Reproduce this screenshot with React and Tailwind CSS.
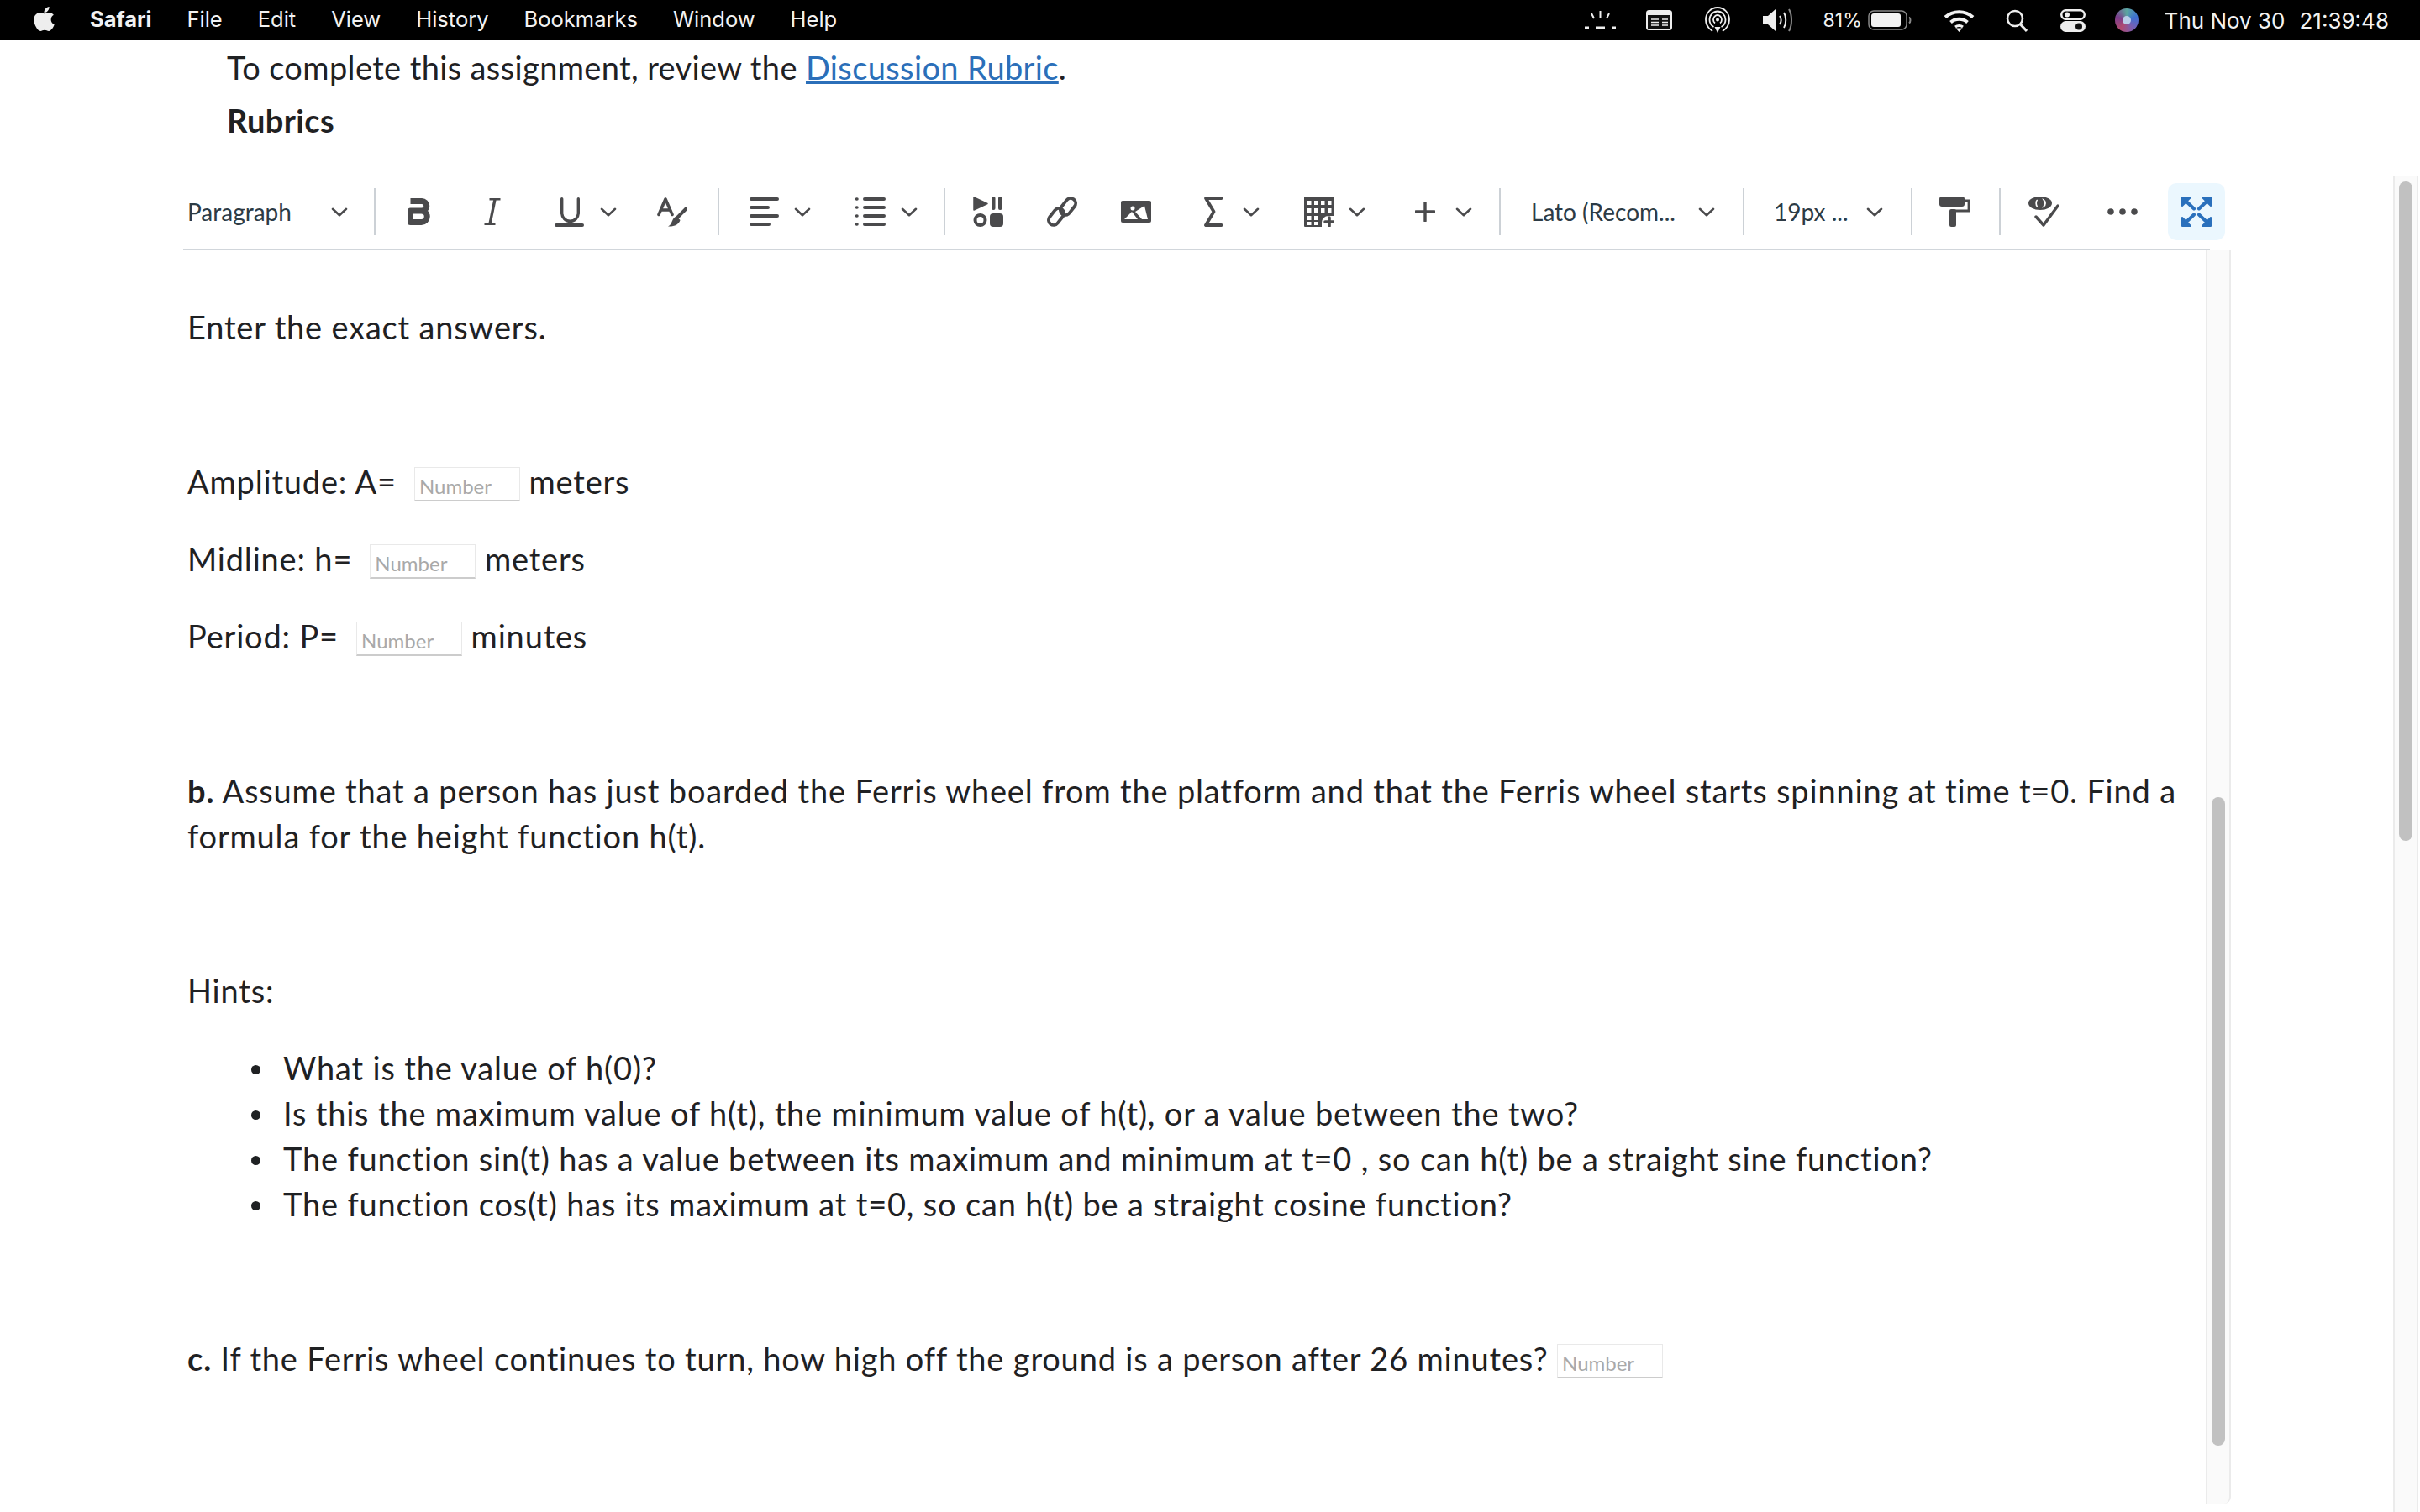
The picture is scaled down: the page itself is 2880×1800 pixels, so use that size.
import React from "react";
import { FaApple } from "react-icons/fa";

const ICON = "#4a4a4c";

const Chevron = ({ className = "" }) => (
  <svg className={`shrink-0 ${className}`} width="20" height="11" viewBox="0 0 20 11" fill="none">
    <path d="M2 1.8 L10 9.200 L18 1.800" stroke={ICON} strokeWidth="2.600" strokeLinecap="round" strokeLinejoin="round" />
  </svg>
);

const Sep = ({ className = "" }) => <div className={`w-[2px] h-[56px] shrink-0 bg-[#ccd1d6] ${className}`} />;

const Placeholder = () => (
  <span className="inline-block w-[126px] h-[41px] align-baseline border border-[#e9e9e9] border-b-2 border-b-[#cccccc] pl-[5px] text-[24px] leading-[44px] tracking-normal text-[#a9a9a9]">
    Number
  </span>
);

const Body = ({ children }) => <p className="mb-[38px]">{children}</p>;

const Hint = ({ children }) => (
  <li className="relative">
    <span className="absolute -left-[38px] top-[24px] w-[11px] h-[11px] rounded-full bg-[#1f2123]" />
    {children}
  </li>
);

function Toolbar() {
  return (
    <div className="flex items-center h-[68px] text-[28px] tracking-normal text-[#2d3b45]">
      <span className="ml-[5px] w-[171px] shrink-0">Paragraph</span>
      <Chevron />
      <Sep className="ml-[31px]" />
      {/* bold */}
      <svg className="ml-[38px] shrink-0" width="27" height="32" viewBox="0 0 27 32" fill="none">
        <path d="M3.500 3.500H17a5.750 5.750 0 0 1 0 11.500H3.500M3.500 15H16.500a6.750 6.750 0 0 1 0 13.500H3.500Z" stroke={ICON} strokeWidth="7" strokeLinejoin="round" />
      </svg>
      {/* italic */}
      <svg className="ml-[64px] shrink-0" width="20" height="32" viewBox="0 0 20 32" fill="none">
        <path d="M6.500 1.300H19.500M0.500 30.700H13.500" stroke={ICON} strokeWidth="2.600" />
        <path d="M13 1.500L7 30.500" stroke={ICON} strokeWidth="3.400" />
      </svg>
      {/* underline */}
      <svg className="ml-[64px] shrink-0" width="35" height="35" viewBox="0 0 35 35" fill="none">
        <path d="M8.700 1.700V18.500a9.800 9.800 0 0 0 19.600 0V1.700" stroke={ICON} strokeWidth="3.400" strokeLinecap="round" />
        <rect y="31" width="35" height="4" rx="2" fill={ICON} />
      </svg>
      <Chevron className="ml-[19px]" />
      {/* text color */}
      <svg className="ml-[48px] shrink-0" width="36" height="35" viewBox="0 0 36 35" fill="none">
        <path d="M2 20.500L10 2L18 20.500M5 15H15" stroke={ICON} strokeWidth="3.600" strokeLinecap="round" strokeLinejoin="round" />
        <path d="M34.500 13.500L23.500 24.500" stroke={ICON} strokeWidth="4" strokeLinecap="round" />
        <path d="M23 22.500L27.500 27C26 32.500 20 35 13 34.500C16 33 17 30.500 18 28C19 25 21 23 23 22.500Z" fill={ICON} />
      </svg>
      <Sep className="ml-[36px]" />
      {/* align */}
      <svg className="ml-[36px] shrink-0" width="35" height="34" viewBox="0 0 35 34" fill="none" stroke={ICON} strokeWidth="4" strokeLinecap="round">
        <path d="M2 2H33M2 12H22M2 22H33M2 32H23" />
      </svg>
      <Chevron className="ml-[18px]" />
      {/* list */}
      <svg className="ml-[53px] shrink-0" width="36" height="34" viewBox="0 0 36 34" fill="none" stroke={ICON} strokeWidth="4" strokeLinecap="round">
        <path d="M11 2H34M11 12H34M11 22H34M11 32H34" />
        <path d="M1.500 2H2M1.500 12H2M1.500 22H2M1.500 32H2" strokeWidth="3.500" />
      </svg>
      <Chevron className="ml-[18px]" />
      <Sep className="ml-[31px]" />
      {/* media */}
      <svg className="ml-[33px] shrink-0" width="36" height="36" viewBox="0 0 36 36" fill={ICON}>
        <path d="M1 1L17 8.500L1 16Z" strokeLinejoin="round" stroke={ICON} strokeWidth="1.500" />
        <rect x="22" width="4.500" height="16" rx="2" />
        <rect x="30" width="4.500" height="16" rx="2" />
        <circle cx="8.500" cy="28" r="6" fill="none" stroke={ICON} strokeWidth="4" />
        <rect x="20" y="20" width="16" height="16" rx="4" />
      </svg>
      {/* link */}
      <svg className="ml-[51px] shrink-0" width="38" height="36" viewBox="0 0 38 36" fill="none" stroke={ICON} strokeWidth="3.800">
        <rect x="20" y="1" width="12" height="22" rx="6" transform="rotate(38 26 12)" />
        <rect x="6" y="13" width="12" height="22" rx="6" transform="rotate(38 12 24)" />
      </svg>
      {/* image */}
      <svg className="ml-[51px] shrink-0" width="36" height="26" viewBox="0 0 36 26">
        <rect width="36" height="26" rx="2" fill={ICON} />
        <circle cx="14" cy="9" r="2.500" fill="#fff" />
        <path d="M4 22L13 13L20 22ZM17 13L28 6L32 22H25Z" fill="#fff" />
      </svg>
      {/* sigma */}
      <svg className="ml-[63px] shrink-0" width="22" height="36" viewBox="0 0 22 36" fill="none">
        <path d="M20.500 2H2L11.500 18L2 34H20.500" stroke={ICON} strokeWidth="3.800" strokeLinejoin="round" strokeLinecap="round" />
      </svg>
      <Chevron className="ml-[24px]" />
      {/* table */}
      <svg className="ml-[53px] shrink-0" width="36" height="36" viewBox="0 0 36 36">
        <path d="M0 1a1 1 0 0 1 1-1H34a1 1 0 0 1 1 1V23H29a8 8 0 0 0-8 8V36H1a1 1 0 0 1-1-1Z" fill={ICON} />
        <g fill="#fff">
          <rect x="4" y="5" width="4.500" height="5" /><rect x="12" y="5" width="4.500" height="5" /><rect x="20" y="5" width="4.500" height="5" /><rect x="28" y="5" width="4.500" height="5" />
          <rect x="4" y="14" width="4.500" height="5" /><rect x="12" y="14" width="4.500" height="5" /><rect x="20" y="14" width="4.500" height="5" /><rect x="28" y="14" width="4.500" height="5" />
          <rect x="4" y="23" width="4.500" height="5" /><rect x="12" y="23" width="4.500" height="5" />
          <rect x="4" y="30" width="4.500" height="4" /><rect x="12" y="30" width="4.500" height="4" />
        </g>
        <path d="M30 25V35M25 30H35" stroke={ICON} strokeWidth="3.600" strokeLinecap="round" />
      </svg>
      <Chevron className="ml-[17px]" />
      {/* plus */}
      <svg className="ml-[59px] shrink-0" width="24" height="24" viewBox="0 0 24 24" fill="none">
        <path d="M12 1V23M1 12H23" stroke={ICON} strokeWidth="3.400" strokeLinecap="round" />
      </svg>
      <Chevron className="ml-[24px]" />
      <Sep className="ml-[32px]" />
      <span className="ml-[36px] w-[199px] shrink-0">Lato (Recom...</span>
      <Chevron />
      <Sep className="ml-[33px]" />
      <span className="ml-[35px] w-[110px] shrink-0">19px ...</span>
      <Chevron />
      <Sep className="ml-[33px]" />
      {/* paint roller */}
      <svg className="ml-[32px] shrink-0" width="37" height="36" viewBox="0 0 37 36" fill="none">
        <rect width="30" height="12" rx="3" fill={ICON} />
        <path d="M30 5H35V17H15" stroke={ICON} strokeWidth="2.800" />
        <rect x="12" y="15" width="8" height="21" rx="2" fill={ICON} />
      </svg>
      <Sep className="ml-[34px]" />
      {/* a11y checker */}
      <svg className="ml-[33px] shrink-0" width="36" height="36" viewBox="0 0 36 36" fill="none">
        <ellipse cx="14" cy="8" rx="14" ry="8" fill={ICON} />
        <path d="M10.500 4C8.500 5.500 8.500 10.500 10.500 12C9 9.500 9 6.500 10.500 4Z" fill="#fff" stroke="#fff" strokeWidth="1.400" />
        <path d="M18 4C21 5.500 21 10.500 18 12C19.500 9.500 19.500 6.500 18 4Z" fill="#fff" stroke="#fff" strokeWidth="1.400" />
        <path d="M9 24L18 34L35 11" stroke={ICON} strokeWidth="3.400" strokeLinecap="round" strokeLinejoin="round" />
      </svg>
      {/* more */}
      <svg className="ml-[58px] shrink-0" width="36" height="8" viewBox="0 0 36 8" fill={ICON}>
        <circle cx="4" cy="4" r="3.800" /><circle cx="18" cy="4" r="3.800" /><circle cx="32" cy="4" r="3.800" />
      </svg>
      {/* fullscreen */}
      <div className="ml-[36px] w-[68px] h-[68px] shrink-0 rounded-[10px] bg-[#ebf7fe] flex items-center justify-center">
        <svg width="36" height="36" viewBox="0 0 36 36" fill="#2a70bc" stroke="#2a70bc" strokeLinejoin="round">
          <path d="M1 1H11L1 11Z" strokeWidth="2" />
          <path d="M35 1H25L35 11Z" strokeWidth="2" />
          <path d="M1 35H11L1 25Z" strokeWidth="2" />
          <path d="M35 35H25L35 25Z" strokeWidth="2" />
          <path d="M5 5L15 14.500M31 5L21 14.500M5 31L15 21.500M31 31L21 21.500" strokeWidth="4" strokeLinecap="round" fill="none" />
        </svg>
      </div>
    </div>
  );
}

function StatusIcons() {
  return (
    <div className="ml-auto flex items-center h-full pr-[37px] text-[26px] text-[#f2f2f2]">
      {/* keyboard brightness */}
      <svg width="39" height="24" viewBox="0 0 39 24" fill="none" stroke="#eee" strokeWidth="3">
        <path d="M19.500 1V9M9 4L12 10M30 4L27 10" strokeWidth="2" />
        <path d="M1 21H6M14 21H25M33 21H38" />
      </svg>
      {/* app window */}
      <svg className="ml-[35px]" width="31" height="24" viewBox="0 0 31 24">
        <rect width="31" height="24" rx="3.500" fill="#eee" />
        <rect x="2" y="6" width="27" height="16" fill="#111" />
        <path d="M6 11H15M6 14.500H15M6 18H15M19 11H26M19 14.500H26M19 18H26" stroke="#eee" strokeWidth="1.600" />
      </svg>
      {/* airdrop */}
      <svg className="ml-[39px]" width="30" height="32" viewBox="0 0 30 32" fill="none" stroke="#eee" strokeWidth="1.800">
        <path d="M9 29C3 25 1 20 1 15.500C1 7.500 7 1 15 1S29 7.500 29 15.500C29 20 27 25 21 29" />
        <path d="M10.500 24C7 22 5.500 18.500 5.500 15.500C5.500 10 10 5.500 15 5.500S24.500 10 24.500 15.500C24.500 18.500 23 22 19.500 24" />
        <path d="M12 19.500C10.500 18.500 10 17 10 15.500C10 12.500 12.500 10 15 10S20 12.500 20 15.500C20 17 19.500 18.500 18 19.500" />
        <circle cx="15" cy="15.500" r="2" fill="#eee" stroke="none" />
        <path d="M15 31L11.500 24H18.500Z" fill="#eee" stroke="none" />
      </svg>
      {/* sound */}
      <svg className="ml-[38px]" width="38" height="28" viewBox="0 0 38 28" fill="none">
        <path d="M1 9H7L16 1V27L7 19H1Z" fill="#eee" />
        <path d="M21 9C23 12 23 16 21 19" stroke="#eee" strokeWidth="2" />
        <path d="M26 5C29 10 29 18 26 23" stroke="#eee" strokeWidth="2" />
        <path d="M32 1C36 8 36 20 32 27" stroke="#888" strokeWidth="2" />
      </svg>
      <span className="ml-[35px] w-[44px] text-[23px] shrink-0">81%</span>
      {/* battery */}
      <svg className="ml-[9px]" width="52" height="24" viewBox="0 0 52 24" fill="none">
        <rect x="1" y="1" width="45" height="22" rx="6" stroke="#888" strokeWidth="1.500" />
        <rect x="4" y="4" width="35" height="16" rx="3" fill="#f2f2f2" />
        <path d="M49 8.500C51 10 51 14 49 15.500" stroke="#888" strokeWidth="2" />
      </svg>
      {/* wifi */}
      <svg className="ml-[38px]" width="37" height="27" viewBox="0 0 37 27" fill="none" stroke="#f2f2f2" strokeWidth="4">
        <path d="M2 9.500C11 1 26 1 35 9.500" />
        <path d="M8.500 15.500C14 10.500 23 10.500 28.500 15.500" />
        <path d="M14 21C16.500 19 20.500 19 23 21" strokeWidth="3" />
        <path d="M18.500 27L14.500 22.500H22.500Z" fill="#f2f2f2" stroke="none" />
      </svg>
      {/* search */}
      <svg className="ml-[37px]" width="26" height="27" viewBox="0 0 26 27" fill="none" stroke="#eee" strokeWidth="2.600">
        <circle cx="11" cy="11" r="9" />
        <path d="M17.500 18L25 26" strokeWidth="3" />
      </svg>
      {/* control center */}
      <svg className="ml-[39px]" width="30" height="27" viewBox="0 0 30 27">
        <rect x="1.250" y="1.250" width="27.500" height="10.500" rx="5.250" fill="none" stroke="#eee" strokeWidth="2.500" />
        <circle cx="8" cy="6.500" r="3" fill="#eee" />
        <rect y="14" width="30" height="13" rx="6.500" fill="#eee" />
        <circle cx="22" cy="20.500" r="4" fill="#111" />
      </svg>
      {/* siri */}
      <div className="ml-[35px] w-[28px] h-[28px] rounded-full bg-[conic-gradient(#5aa7a0,#3d6fd0,#7a5fb0,#b04a70,#7a3d8c,#5aa7a0)] flex items-center justify-center">
        <div className="w-[10px] h-[10px] rounded-full bg-[#b9cde8]" />
      </div>
      <span className="ml-[31px]">Thu Nov 30</span>
      <span className="ml-[17px]">21:39:48</span>
    </div>
  );
}

export default function App() {
  return (
    <div className="w-[2880px] h-[1800px] overflow-hidden flex flex-col bg-white font-['Lato',sans-serif]">
      <header className="h-[48px] shrink-0 flex items-center bg-black text-[#f2f2f2] font-['Inter',sans-serif]">
        <FaApple className="ml-[36px] w-[33px] h-[33px] -mt-[3px] text-[#eee] shrink-0" />
        <nav className="ml-[38px] flex items-center gap-[42px] text-[25.500px] -mt-[1px]">
          <span className="font-bold">Safari</span>
          <span>File</span>
          <span>Edit</span>
          <span>View</span>
          <span>History</span>
          <span>Bookmarks</span>
          <span>Window</span>
          <span>Help</span>
        </nav>
        <StatusIcons />
      </header>

      <div className="flex flex-1 min-h-0">
        <main className="w-[2848px] shrink-0 text-[38px] leading-[54px] text-[#1f2123]">
          <div className="pl-[270px] pt-[5px] tracking-[0.370px]">
            <p className="mb-[9px]">
              To complete this assignment, review the{" "}
              <a href="#" className="text-[#2b6fb9] underline">Discussion Rubric</a>.
            </p>
            <p className="font-bold">Rubrics</p>
          </div>

          <section className="ml-[218px] w-[2437px] mt-[48px]">
            <Toolbar />
            <div className="mt-[10px] w-[2412px] h-[2px] bg-[#d1d6db]" />
            <div className="flex h-[1492px]">
              <div className="w-[2407px] shrink-0 pl-[5px] pt-[64px] overflow-hidden tracking-[0.820px]">
                <Body>Enter the exact answers.</Body>
                <Body>&nbsp;</Body>
                <Body>Amplitude: A=&nbsp; <Placeholder /> meters</Body>
                <Body>Midline: h=&nbsp; <Placeholder /> meters</Body>
                <Body>Period: P=&nbsp; <Placeholder /> minutes</Body>
                <Body>&nbsp;</Body>
                <Body>
                  <b>b.</b> Assume that a person has just boarded the Ferris wheel from the platform and that the Ferris wheel starts spinning at time t=0. Find a formula for the height function h(t).
                </Body>
                <Body>&nbsp;</Body>
                <Body>Hints:</Body>
                <ul className="pl-[114px] mb-[38px]">
                  <Hint>What is the value of h(0)?</Hint>
                  <Hint>Is this the maximum value of h(t), the minimum value of h(t), or a value between the two?</Hint>
                  <Hint>The function sin(t) has a value between its maximum and minimum at t=0 , so can h(t) be a straight sine function?</Hint>
                  <Hint>The function cos(t) has its maximum at t=0, so can h(t) be a straight cosine function?</Hint>
                </ul>
                <Body>&nbsp;</Body>
                <Body>
                  <b>c.</b> If the Ferris wheel continues to turn, how high off the ground is a person after 26 minutes? <Placeholder />
                </Body>
              </div>
              <div className="w-[30px] shrink-0 border-x-2 border-[#ebebeb] bg-[#fafafa] rounded-br-[8px] pt-[651px]">
                <div className="mx-auto w-[16px] h-[772px] rounded-full bg-[#c1c1c1]" />
              </div>
            </div>
          </section>
        </main>

        <aside className="w-[30px] shrink-0 mt-[162px] border-x-2 border-[#ebebeb] bg-[#fafafa] pt-[6px]">
          <div className="mx-auto w-[16px] h-[785px] rounded-full bg-[#c1c1c1]" />
        </aside>
      </div>
    </div>
  );
}
